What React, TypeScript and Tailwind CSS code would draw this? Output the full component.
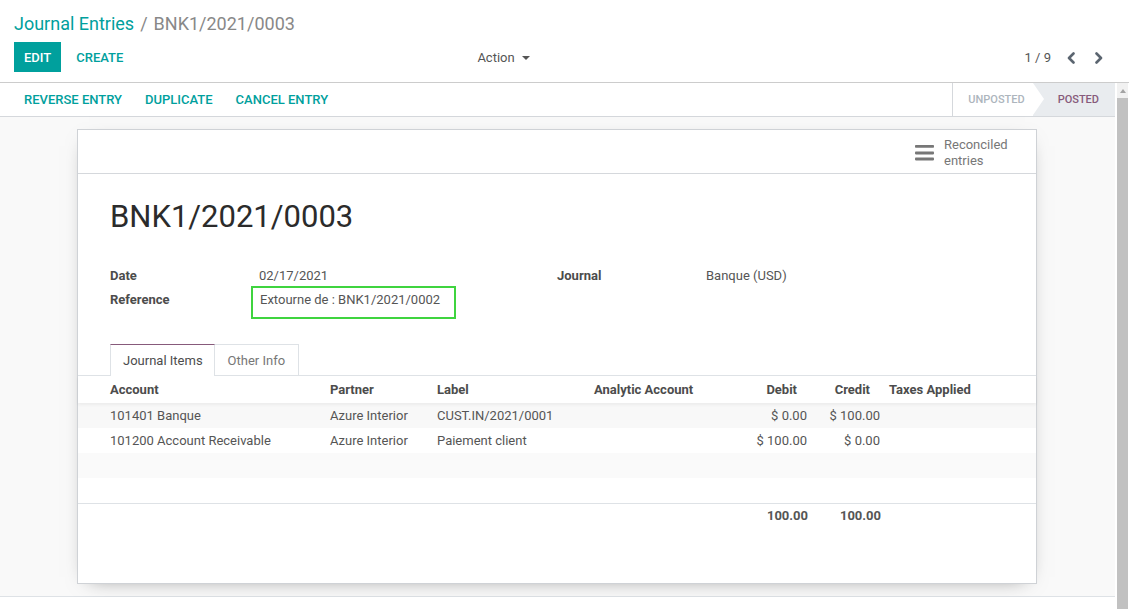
import { ReactNode } from "react";

const cols = "grid grid-cols-[248px_107px_157px_150px_71px_73px_152px]";

type Line = {
    account: string;
    partner: string;
    label: string;
    debit: string;
    credit: string;
};

const lines: Line[] = [
    { account: "101401 Banque", partner: "Azure Interior", label: "CUST.IN/2021/0001", debit: "$ 0.00", credit: "$ 100.00" },
    { account: "101200 Account Receivable", partner: "Azure Interior", label: "Paiement client", debit: "$ 100.00", credit: "$ 0.00" },
];

function Chevron({ dir }: { dir: "left" | "right" }) {
    return (
        <svg width="10" height="12" viewBox="0 0 10 12" fill="none">
            <polyline
                points={dir === "left" ? "7.5,1.5 3,6 7.5,10.5" : "2.5,1.5 7,6 2.5,10.5"}
                stroke="#5b6570"
                strokeWidth="2.6"
                strokeLinecap="round"
                strokeLinejoin="round"
            />
        </svg>
    );
}

function Field({ label, children }: { label: string; children: ReactNode }) {
    return (
        <div className="flex">
            <div className="w-[141px] font-bold text-[#4c4c4c]">{label}</div>
            <div className="flex-1">{children}</div>
        </div>
    );
}

export default function App() {
    return (
        <div className="h-[609px] w-full overflow-hidden bg-white flex flex-col font-['Roboto','Liberation_Sans',sans-serif] text-[13px] text-[#4c4c4c]">
            {/* control panel */}
            <div className="h-[83px] shrink-0 border-b border-[#cccccc] pl-[14px] pr-[16px] pt-[12px]">
                <div className="flex items-center text-[18px] leading-[24px]">
                    <span className="text-[#00A09D]">Journal Entries</span>
                    <span className="px-[6px] text-[#888]">/</span>
                    <span className="text-[#888]">BNK1/2021/0003</span>
                </div>
                <div className="mt-[6px] flex items-center h-[30px]">
                    <button className="h-[30px] px-[10px] pt-[2px] bg-[#00A09D] text-white font-medium uppercase">Edit</button>
                    <button className="h-[30px] ml-[5px] px-[10px] pt-[2px] text-[#00A09D] font-medium uppercase">Create</button>
                    <button className="ml-[344px] mt-[2px] flex items-center text-[#555]">
                        Action
                        <span className="ml-[7px] border-t-[4px] border-x-[4px] border-x-transparent border-t-[#555]"></span>
                    </button>
                    <div className="ml-auto mt-[2px] flex items-center">
                        <span className="mr-[6px] text-[#555]">1 / 9</span>
                        <button className="w-[28px] flex justify-center"><Chevron dir="left" /></button>
                        <button className="w-[28px] flex justify-center"><Chevron dir="right" /></button>
                    </div>
                </div>
            </div>

            <div className="flex flex-1 min-h-0">
                <div className="flex-1 min-w-0 flex flex-col">
                    {/* status bar */}
                    <div className="h-[34px] shrink-0 flex border-b border-[#d5d8dc]">
                        <div className="flex items-center pl-[12px] text-[#00A09D] font-medium">
                            <button className="px-[12px] uppercase">Reverse Entry</button>
                            <button className="px-[11px] uppercase">Duplicate</button>
                            <button className="px-[12px] uppercase">Cancel Entry</button>
                        </div>
                        <div className="ml-auto flex h-full text-[11px] font-medium">
                            <div className="h-full flex items-center border-l border-[#d5d8dc] pl-[15px] pr-[8px] pt-[2px] text-[#adb5bd] uppercase">Unposted</div>
                            <div className="relative h-full flex items-center bg-[#e9ecef] pl-[25px] pr-[16px] pt-[2px] text-[#875A7B] uppercase">
                                <span className="absolute left-0 top-0 border-l-[11px] border-l-white border-y-[16.5px] border-y-transparent"></span>
                                Posted
                            </div>
                        </div>
                    </div>

                    {/* content */}
                    <div className="shrink-0 bg-[#f9f9f9] pt-[12px] pb-[12px] border-b border-[#dee2e6]">
                        <div className="w-[960px] ml-[77px] bg-white border border-[#cfd2d6] shadow-[0_5px_20px_-12px_rgba(0,0,0,0.55)] pb-[53px]">
                            <div className="h-[44px] border-b border-[#d5d8dc] flex justify-end">
                                <div className="w-[135px] pl-[14px] flex items-center gap-[10px] pt-[3px]">
                                    <svg width="19" height="16" viewBox="0 0 19 16" className="shrink-0 -mt-[1px]">
                                        <rect x="0" y="0" width="19" height="2.8" rx="0.8" fill="#777" />
                                        <rect x="0" y="6.6" width="19" height="2.8" rx="0.8" fill="#777" />
                                        <rect x="0" y="12.6" width="19" height="2.8" rx="0.8" fill="#777" />
                                    </svg>
                                    <div className="leading-[16px] text-[#777]">
                                        Reconciled<br />entries
                                    </div>
                                </div>
                            </div>

                            <div className="px-[32px] pt-[24px]">
                                <h1 className="text-[31px] leading-[37px] text-[#2b2b2b]">BNK1/2021/0003</h1>

                                <div className="mt-[28px] grid grid-cols-[447px_447px]">
                                    <div>
                                        <div className="h-[23px] pt-[1px] leading-[23px]">
                                            <Field label="Date"><span className="pl-[8px] text-[#555]">02/17/2021</span></Field>
                                        </div>
                                        <div className="h-[33px]">
                                            <div className="flex">
                                                <div className="w-[141px] font-bold text-[#4c4c4c] leading-[19px] pt-[4px]">Reference</div>
                                                <div className="w-[205px] h-[33px] border-2 border-[#3fd43f] pl-[7px] pt-[2px] leading-[19px] text-[#555]">
                                                    Extourne de : BNK1/2021/0002
                                                </div>
                                            </div>
                                        </div>
                                    </div>
                                    <div>
                                        <div className="h-[23px] pt-[1px] leading-[23px]">
                                            <Field label="Journal"><span className="pl-[8px] text-[#555]">Banque (USD)</span></Field>
                                        </div>
                                    </div>
                                </div>
                            </div>

                            {/* notebook */}
                            <div className="mt-[25px] h-[32px] flex border-b border-[#dee2e6] pl-[32px]">
                                <div className="h-[32px] -mb-px bg-white border-x border-t border-x-[#dee2e6] border-t-[#875A7B] pl-[12px] pr-[11px] flex items-center text-[#4c4c4c]">
                                    Journal Items
                                </div>
                                <div className="h-[31px] border-t border-r border-[#dee2e6] px-[13px] pt-[1px] flex items-center text-[#777]">
                                    Other Info
                                </div>
                            </div>

                            <div className={`${cols} relative z-10 h-[27px] items-center font-bold text-[#4c4c4c] bg-white shadow-[0_2px_3px_rgba(0,0,0,0.05)]`}>
                                <div className="pl-[32px]">Account</div>
                                <div className="pl-[4px]">Partner</div>
                                <div className="pl-[4px]">Label</div>
                                <div className="pl-[4px]">Analytic Account</div>
                                <div className="text-right pr-[14px]">Debit</div>
                                <div className="text-right pr-[14px]">Credit</div>
                                <div className="pl-[5px]">Taxes Applied</div>
                            </div>
                            {lines.map((l, i) => (
                                <div key={l.account} className={`${cols} h-[25px] items-center text-[#555] ${i % 2 === 0 ? "bg-[#f8f8f8]" : "bg-white"}`}>
                                    <div className="pl-[32px]">{l.account}</div>
                                    <div className="pl-[4px]">{l.partner}</div>
                                    <div className="pl-[4px]">{l.label}</div>
                                    <div></div>
                                    <div className="text-right pr-[4px]">{l.debit}</div>
                                    <div className="text-right pr-[4px]">{l.credit}</div>
                                    <div></div>
                                </div>
                            ))}
                            <div className="h-[25px] bg-[#fafafa]"></div>
                            <div className="h-[25px] bg-white"></div>
                            <div className={`${cols} h-[27px] border-t border-[#dee2e6] items-start pt-[2px] leading-[19px] font-bold text-[#555]`}>
                                <div></div>
                                <div></div>
                                <div></div>
                                <div></div>
                                <div className="text-right pr-[3px]">100.00</div>
                                <div className="text-right pr-[3px]">100.00</div>
                                <div></div>
                            </div>
                        </div>
                    </div>
                    <div className="flex-1 bg-white"></div>
                </div>

                {/* scrollbar */}
                <div className="w-[14px] shrink-0 bg-white pl-[2px] pr-[1px] flex flex-col">
                    <div className="h-[15px] bg-[#f1f1f1] flex items-center justify-center">
                        <span className="border-b-[4px] border-x-[3px] border-x-transparent border-b-[#a3a3a3]"></span>
                    </div>
                    <div className="flex-1 bg-[#c1c1c1]"></div>
                </div>
            </div>
        </div>
    );
}
